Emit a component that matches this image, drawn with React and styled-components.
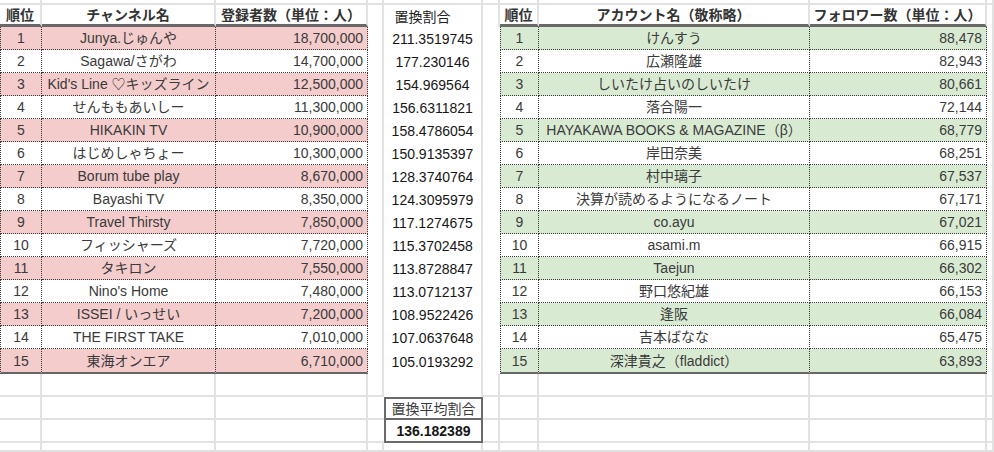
import React from 'react';
import styled, { createGlobalStyle } from 'styled-components';

const GRID = '#e2e2e2';
const DOT = '1px dotted #3a3a3a';
const THICK = '2px solid #666';
const PINK = '#f4cccc';
const GREEN = '#d9ead3';

const GlobalStyle = createGlobalStyle`
  html, body { margin: 0; padding: 0; background: #fff; }
  body { font-family: "Liberation Sans", "Noto Sans CJK JP", Arial, sans-serif; }
`;

const Sheet = styled.div`
  display: grid;
  grid-template-columns: 42px 174px 152px 16px 99px 17px 39px 271px 177px 1fr;
  grid-template-rows: 5px 22px repeat(14, 23px) 25px 23px 23px 23px 1fr;
  width: 994px;
  height: 452px;
  overflow: hidden;
  background: #fff;
  font-size: 14px;
  line-height: 16px;
  color: #333;
`;

const Row = styled.div`
  display: contents;
`;

const BaseCell = styled.div`
  box-sizing: border-box;
  display: flex;
  align-items: center;
  min-width: 0;
  overflow: hidden;
  white-space: nowrap;
`;

const GridCell = styled(BaseCell)`
  border-right: ${(p) => (p.$noRight ? 'none' : `2px solid ${GRID}`)};
  border-bottom: ${(p) => (p.$noBottom ? 'none' : `2px solid ${GRID}`)};
`;

const GapCell = styled(BaseCell)`
  border-right: ${(p) => (p.$bare ? 'none' : `2px solid ${GRID}`)};
`;

const HeadCell = styled(BaseCell)`
  justify-content: center;
  border-right: 2px solid ${GRID};
  border-bottom: 3px solid #686868;
  font-weight: 700;
  color: #333;
  padding-top: 1px;
`;

const NoteHead = styled(BaseCell)`
  justify-content: center;
  padding-right: 20px;
  padding-top: 2px;
  border-right: 2px solid ${GRID};
  color: #222;
`;

const DataCell = styled(BaseCell)`
  justify-content: ${(p) => (p.$align === 'right' ? 'flex-end' : 'center')};
  padding: 0 ${(p) => (p.$align === 'right' ? '4px' : '2px')};
  background: ${(p) => p.$fill || '#fff'};
  border-right: ${DOT};
  border-left: ${(p) => (p.$first ? DOT : 'none')};
  border-bottom: ${(p) => (p.$last ? THICK : DOT)};
  color: #3a3a3a;
`;

const RatioCell = styled(BaseCell)`
  justify-content: center;
  border-right: 2px solid ${GRID};
  color: #161616;
`;

const BoxCell = styled(BaseCell)`
  justify-content: center;
  border: 2px solid #6a6a6a;
  border-top: ${(p) => (p.$lower ? 'none' : '2px solid #6a6a6a')};
  font-weight: ${(p) => (p.$lower ? 700 : 400)};
  color: ${(p) => (p.$lower ? '#161616' : '#3a3a3a')};
`;

const channels = [
  ['Junya.じゅんや', '18,700,000', '211.3519745'],
  ['Sagawa/さがわ', '14,700,000', '177.230146'],
  ["Kid's Line ♡キッズライン", '12,500,000', '154.969564'],
  ['せんももあいしー', '11,300,000', '156.6311821'],
  ['HIKAKIN TV', '10,900,000', '158.4786054'],
  ['はじめしゃちょー', '10,300,000', '150.9135397'],
  ['Borum tube play', '8,670,000', '128.3740764'],
  ['Bayashi TV', '8,350,000', '124.3095979'],
  ['Travel Thirsty', '7,850,000', '117.1274675'],
  ['フィッシャーズ', '7,720,000', '115.3702458'],
  ['タキロン', '7,550,000', '113.8728847'],
  ["Nino's Home", '7,480,000', '113.0712137'],
  ['ISSEI / いっせい', '7,200,000', '108.9522426'],
  ['THE FIRST TAKE', '7,010,000', '107.0637648'],
  ['東海オンエア', '6,710,000', '105.0193292'],
];

const accounts = [
  ['けんすう', '88,478'],
  ['広瀬隆雄', '82,943'],
  ['しいたけ占いのしいたけ', '80,661'],
  ['落合陽一', '72,144'],
  ['HAYAKAWA BOOKS & MAGAZINE（β）', '68,779'],
  ['岸田奈美', '68,251'],
  ['村中璃子', '67,537'],
  ['決算が読めるようになるノート', '67,171'],
  ['co.ayu', '67,021'],
  ['asami.m', '66,915'],
  ['Taejun', '66,302'],
  ['野口悠紀雄', '66,153'],
  ['逢阪', '66,084'],
  ['吉本ばなな', '65,475'],
  ['深津貴之（fladdict）', '63,893'],
];

const blanks = (n, keyBase, props = {}) =>
  Array.from({ length: n }, (_, i) => <GridCell key={`${keyBase}-${i}`} {...props} />);

export default function App() {
  return (
    <>
      <GlobalStyle />
      <Sheet>
        <Row>{blanks(10, 'top')}</Row>

        <Row>
          <HeadCell>順位</HeadCell>
          <HeadCell>チャンネル名</HeadCell>
          <HeadCell>登録者数（単位：人）</HeadCell>
          <GapCell />
          <NoteHead>置換割合</NoteHead>
          <GapCell />
          <HeadCell>順位</HeadCell>
          <HeadCell>アカウント名（敬称略）</HeadCell>
          <HeadCell>フォロワー数（単位：人）</HeadCell>
          <GridCell $noBottom />
        </Row>

        {channels.map(([name, subs, ratio], i) => {
          const odd = i % 2 === 0;
          const last = i === channels.length - 1;
          const [acc, fol] = accounts[i];
          return (
            <Row key={name}>
              <DataCell $first $last={last} $fill={odd ? PINK : null}>{i + 1}</DataCell>
              <DataCell $last={last} $fill={odd ? PINK : null}>{name}</DataCell>
              <DataCell $last={last} $fill={odd ? PINK : null} $align="right">{subs}</DataCell>
              <GapCell />
              <RatioCell>{ratio}</RatioCell>
              <GapCell $bare />
              <DataCell $first $last={last} $fill={odd ? GREEN : null}>{i + 1}</DataCell>
              <DataCell $last={last} $fill={odd ? GREEN : null}>{acc}</DataCell>
              <DataCell $last={last} $fill={odd ? GREEN : null} $align="right">{fol}</DataCell>
              <GridCell $noBottom />
            </Row>
          );
        })}

        <Row>
          {blanks(4, 'r16a')}
          <GapCell />
          {blanks(5, 'r16b')}
        </Row>

        <Row>
          {blanks(3, 'r17a')}
          <GridCell $noRight />
          <BoxCell>置換平均割合</BoxCell>
          {blanks(5, 'r17b')}
        </Row>

        <Row>
          {blanks(3, 'r18a')}
          <GridCell $noRight />
          <BoxCell $lower>136.182389</BoxCell>
          {blanks(5, 'r18b')}
        </Row>

        <Row>{blanks(10, 'r19')}</Row>
      </Sheet>
    </>
  );
}
